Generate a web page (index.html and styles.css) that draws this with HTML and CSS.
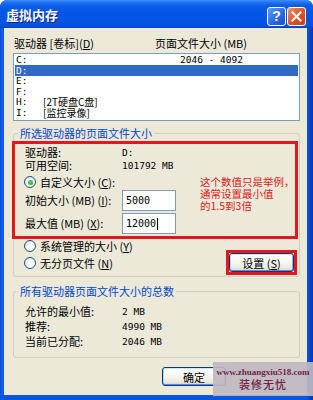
FILE: index.html
```html
<!DOCTYPE html>
<html>
<head>
<meta charset="utf-8">
<link rel="stylesheet" href="styles.css">
</head>
<body>
<div class="window">
  <div class="titlebar">
    <span class="title">虚拟内存</span>
    <div class="tbtns">
      <span class="tbtn help">?</span>
      <span class="tbtn close"><svg width="11" height="11" viewBox="0 0 11 11"><path d="M1.5 1.5 L9.5 9.5 M9.5 1.5 L1.5 9.5" stroke="#fff" stroke-width="2" stroke-linecap="square"/></svg></span>
    </div>
  </div>
  <div class="client">
    <div class="listhead"><span class="lh1">驱动器 [卷标](<u>D</u>)</span><span class="lh2">页面文件大小 (MB)</span></div>
    <div class="listbox">
      <div class="row first"><span class="drv">C:</span><span></span><span class="mono">2046 - 4092</span></div>
      <div class="row sel"><span class="drv">D:</span><span></span><span></span></div>
      <div class="row"><span class="drv">E:</span><span></span><span></span></div>
      <div class="row"><span class="drv">F:</span><span></span><span></span></div>
      <div class="row"><span class="drv">H:</span><span class="lbl">[2T硬盘C盘]</span><span></span></div>
      <div class="row"><span class="drv">I:</span><span class="lbl">[监控录像]</span><span></span></div>
    </div>
    <fieldset class="group g1">
      <legend>所选驱动器的页面文件大小</legend>
      <div class="redbox">
        <span class="k r1">驱动器:</span><span class="v r1 mono">D:</span>
        <span class="k r2">可用空间:</span><span class="v r2 mono">101792 MB</span>
        <label class="radiorow r3"><span class="radio checked"></span>自定义大小 (<u>C</u>):</label>
        <span class="k r4 tall">初始大小 (MB) (<u>I</u>):</span><span class="input r4">5000</span>
        <span class="k r5 tall">最大值 (MB) (<u>X</u>):</span><span class="input r5">12000<span class="caret"></span></span>
        <div class="note">这个数值只是举例，<br>通常设置最小值<br>的1.5到3倍</div>
      </div>
      <div class="lower">
        <div class="radios">
          <label class="radiorow"><span class="radio"></span>系统管理的大小 (<u>Y</u>)</label>
          <label class="radiorow"><span class="radio"></span>无分页文件 (<u>N</u>)</label>
        </div>
        <div class="setwrap"><span class="btn setbtn">设置 (<u>S</u>)</span></div>
      </div>
    </fieldset>
    <fieldset class="group g2">
      <legend>所有驱动器页面文件大小的总数</legend>
      <div class="totals">
        <span>允许的最小值:</span><span class="mono">2 MB</span>
        <span>推荐:</span><span class="mono">4990 MB</span>
        <span>当前已分配:</span><span class="mono">2046 MB</span>
      </div>
    </fieldset>
    <div class="buttons"><span class="btn okbtn">确定</span></div>
  </div>
  <div class="watermark">
    <div class="wm1">www.zhuangxiu518.com</div>
    <div class="wm2">装修无忧</div>
  </div>
</div>
</body>
</html>
```
FILE: styles.css
```css
* { box-sizing: border-box; }
html, body { margin: 0; padding: 0; }
body {
  width: 313px; height: 400px; overflow: hidden; background: #ffffff;
  font-family: "Noto Sans CJK SC", "Liberation Sans", sans-serif;
  font-size: 11px; color: #000;
}
u { text-decoration: underline; text-underline-offset: 1px; }
.mono { font-family: "DejaVu Sans Mono", "Liberation Mono", monospace; font-size: 9.5px; }

.window {
  position: relative; width: 313px; height: 400px;
  background: linear-gradient(to right, #0A4BD8, #1560E8 2px, #0A55E0 4px, #0A55E0 calc(100% - 6px), #0845C8 calc(100% - 3px), #0335B0);
  border-radius: 7px 7px 0 0;
  display: flex; flex-direction: column;
}
.titlebar {
  height: 28px; flex: none;
  display: flex; align-items: flex-start;
  padding: 0 7px 0 6px;
  border-radius: 7px 7px 0 0;
  background: linear-gradient(to bottom, #3E8EF7 0, #1B6DF0 3px, #0A5BE8 6px, #0556E6 14px, #0455E3 22px, #0450DA 26px, #0340C0 28px);
}
.title {
  margin-top: 6px; line-height: 18px;
  color: #fff; font-weight: bold; font-size: 13px;
  text-shadow: 1px 1px 0 #0A1E8A;
}
.tbtns { margin-left: auto; margin-top: 7px; display: flex; gap: 1px; }
.tbtn {
  width: 19px; height: 19px; border: 1px solid #fff; border-radius: 3px;
  display: flex; align-items: center; justify-content: center;
}
.help {
  background: linear-gradient(135deg, #5BA0FF, #2867E8 60%, #1D50D0);
  color: #fff; font-weight: bold; font-size: 14px; line-height: 17px;
  font-family: "Liberation Sans", sans-serif;
}
.close { background: linear-gradient(135deg, #F0966E, #E0562A 50%, #C93A10); }

.client {
  flex: 1; margin: 0 6px 5px 4px;
  background: #ECE9D8;
  padding: 0 7px 0 9px;
}
.listhead { display: flex; margin-top: 9px; height: 12px; line-height: 12px; }
.lh1 { width: 142px; padding-left: 1px; }
.listbox {
  margin-top: 4px; height: 68px; overflow: hidden;
  background: #fff; border: 1px solid #7F9DB9; padding: 0 1px;
}
.row {
  display: grid; grid-template-columns: 27px 137px 1fr; align-items: center;
  height: 10.5px; line-height: 10px; padding-left: 1px; white-space: nowrap;
}
.row.first, .row.sel { height: 11px; }
.row.sel { background: #316AC5; color: #fff; }
.drv { font-family: "DejaVu Sans Mono", "Liberation Mono", monospace; font-size: 9.5px; }
.lbl { font-size: 10px; }

.group {
  margin: 0; padding: 0; min-width: 0;
  border: 1px solid #D0D0BF; border-radius: 3px;
}
.group legend {
  margin-left: 4px; padding: 0 2px;
  line-height: 12px; height: 12px; color: #0046D5;
}
.g1 { margin-top: 6px; padding: 2px 0 1px 0; }
.redbox {
  margin: 0 1px 0 -2px;
  border: 3px solid #E3171B;
  padding: 2px 0 2px 10px;
  display: grid;
  grid-template-columns: 97px 54px 1fr;
  grid-template-rows: 13px 13px 17px 22px 23px;
}
.k, .v { line-height: 13px; white-space: nowrap; }
.r1 { grid-row: 1; }
.r2 { grid-row: 2; }
.r3 { grid-row: 3; grid-column: 1 / 3; align-self: end; }
.r4 { grid-row: 4; align-self: end; }
.r5 { grid-row: 5; align-self: end; }
.k.tall { line-height: 21px; }
.v { grid-column: 2; }
.input {
  grid-column: 2; height: 21px;
  background: #fff; border: 1px solid #7F9DB9;
  line-height: 19px; padding-left: 3px;
  font-family: "DejaVu Sans Mono", "Liberation Mono", monospace; font-size: 10px;
  display: flex; align-items: center;
}
.caret { display: inline-block; width: 1px; height: 12px; background: #000; margin-left: 1px; }
.note {
  grid-column: 3; grid-row: 3 / 5; align-self: start;
  margin-top: 4px; padding-left: 24px;
  color: #E3171B; font-size: 10.5px; line-height: 12px; white-space: nowrap;
}
.radiorow { display: flex; align-items: center; height: 14px; line-height: 14px; white-space: nowrap; }
.radio {
  width: 12px; height: 12px; margin-left: -1px; margin-right: 4px; flex: none;
  border: 1px solid #1C5180; border-radius: 50%;
  background: radial-gradient(circle at 65% 65%, #ffffff 30%, #E2E2DB 80%, #D0D0C8);
  display: flex; align-items: center; justify-content: center;
}
.radio.checked::after {
  content: ""; width: 5px; height: 5px; border-radius: 50%;
  background: radial-gradient(circle at 35% 35%, #55D455, #21A121);
}
.lower { display: flex; align-items: flex-start; }
.radios { padding-left: 11px; display: flex; flex-direction: column; gap: 4px; }
.radios .radiorow { height: 13px; }
.setwrap { margin-left: auto; margin-right: 2px; margin-top: 11px; border: 3px solid #E3171B; display: flex; }
.btn {
  display: flex; align-items: center; justify-content: center;
  border: 1px solid #003C74; border-radius: 3px;
  background: linear-gradient(to bottom, #FFFFFF, #F5F4EF 55%, #E8E6DC 85%, #D6D0C5);
  box-shadow: inset 0 1px 0 #CEE7FF, inset 0 -1px 0 #6982EE, inset 1px 0 0 #B8D2FF, inset -1px 0 0 #89ADE4;
  line-height: 14px; white-space: nowrap;
}
.setbtn { width: 65px; height: 19px; }

.g2 { margin-top: 8px; }
.totals {
  display: grid; grid-template-columns: 97px 1fr;
  padding: 7px 0 8px 11px;
}
.totals span { line-height: 15px; height: 15px; white-space: nowrap; }

.buttons { display: flex; margin-top: 9px; }
.okbtn { width: 64px; height: 19px; margin-left: 149px; }

.watermark {
  position: absolute; left: 213px; top: 362px; width: 100px; height: 34px;
  background: rgba(190, 185, 192, 0.92);
  padding-top: 5px; text-align: center; color: #74224A;
}
.wm1 { font-family: "Liberation Serif", serif; font-weight: bold; font-size: 9px; line-height: 11px; }
.wm2 { font-size: 11px; line-height: 12px; font-weight: 500; letter-spacing: 1px; }
```
